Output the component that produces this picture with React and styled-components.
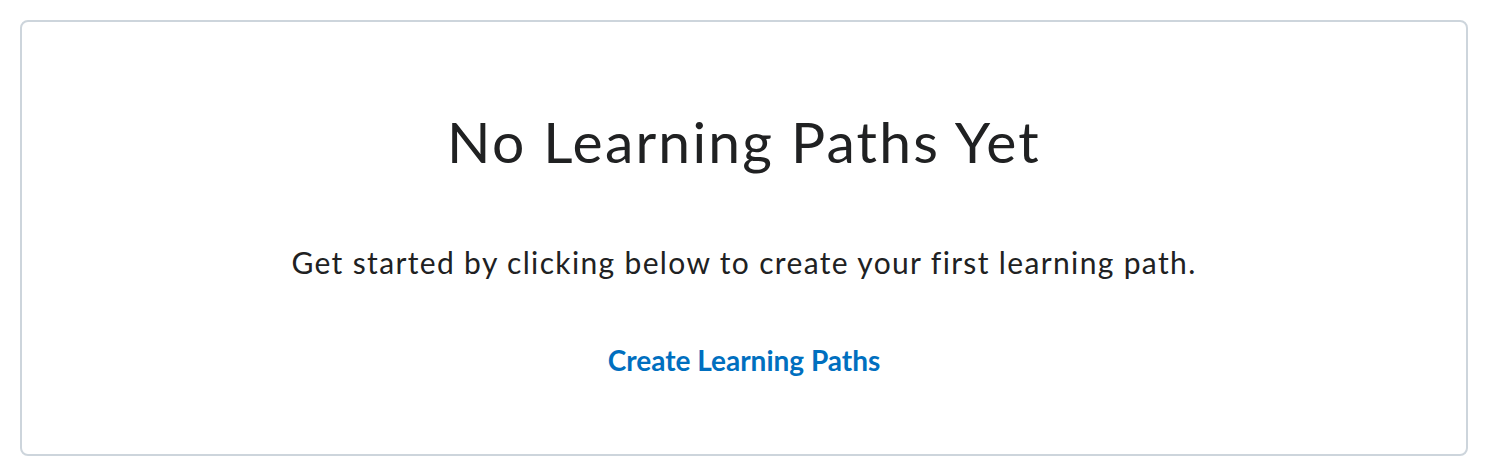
import styled, { createGlobalStyle } from 'styled-components';

const GlobalStyle = createGlobalStyle`
  body {
    margin: 0;
    padding: 20px;
    background: #ffffff;
    font-family: Lato, "Noto Sans", sans-serif;
  }
`;

const Card = styled.section`
  box-sizing: border-box;
  height: 436px;
  border: 2px solid #cdd5dc;
  border-radius: 8px;
  display: flex;
  flex-direction: column;
  align-items: center;
  padding-top: 85px;
  text-align: center;
`;

const Title = styled.h1`
  margin: 0;
  font-size: 57px;
  font-weight: 400;
  line-height: 68px;
  letter-spacing: 2.2px;
  color: #202122;
`;

const Text = styled.p`
  margin: 66px 0 0;
  font-size: 30px;
  line-height: 42px;
  letter-spacing: 1.35px;
  color: #202122;
`;

const Action = styled.a`
  margin-top: 57px;
  font-size: 28px;
  font-weight: 700;
  line-height: 40px;
  color: #006fbf;
  text-decoration: none;
  cursor: pointer;
`;

export default function App() {
  return (
    <>
      <GlobalStyle />
      <Card>
        <Title>No Learning Paths Yet</Title>
        <Text>Get started by clicking below to create your first learning path.</Text>
        <Action>Create Learning Paths</Action>
      </Card>
    </>
  );
}
